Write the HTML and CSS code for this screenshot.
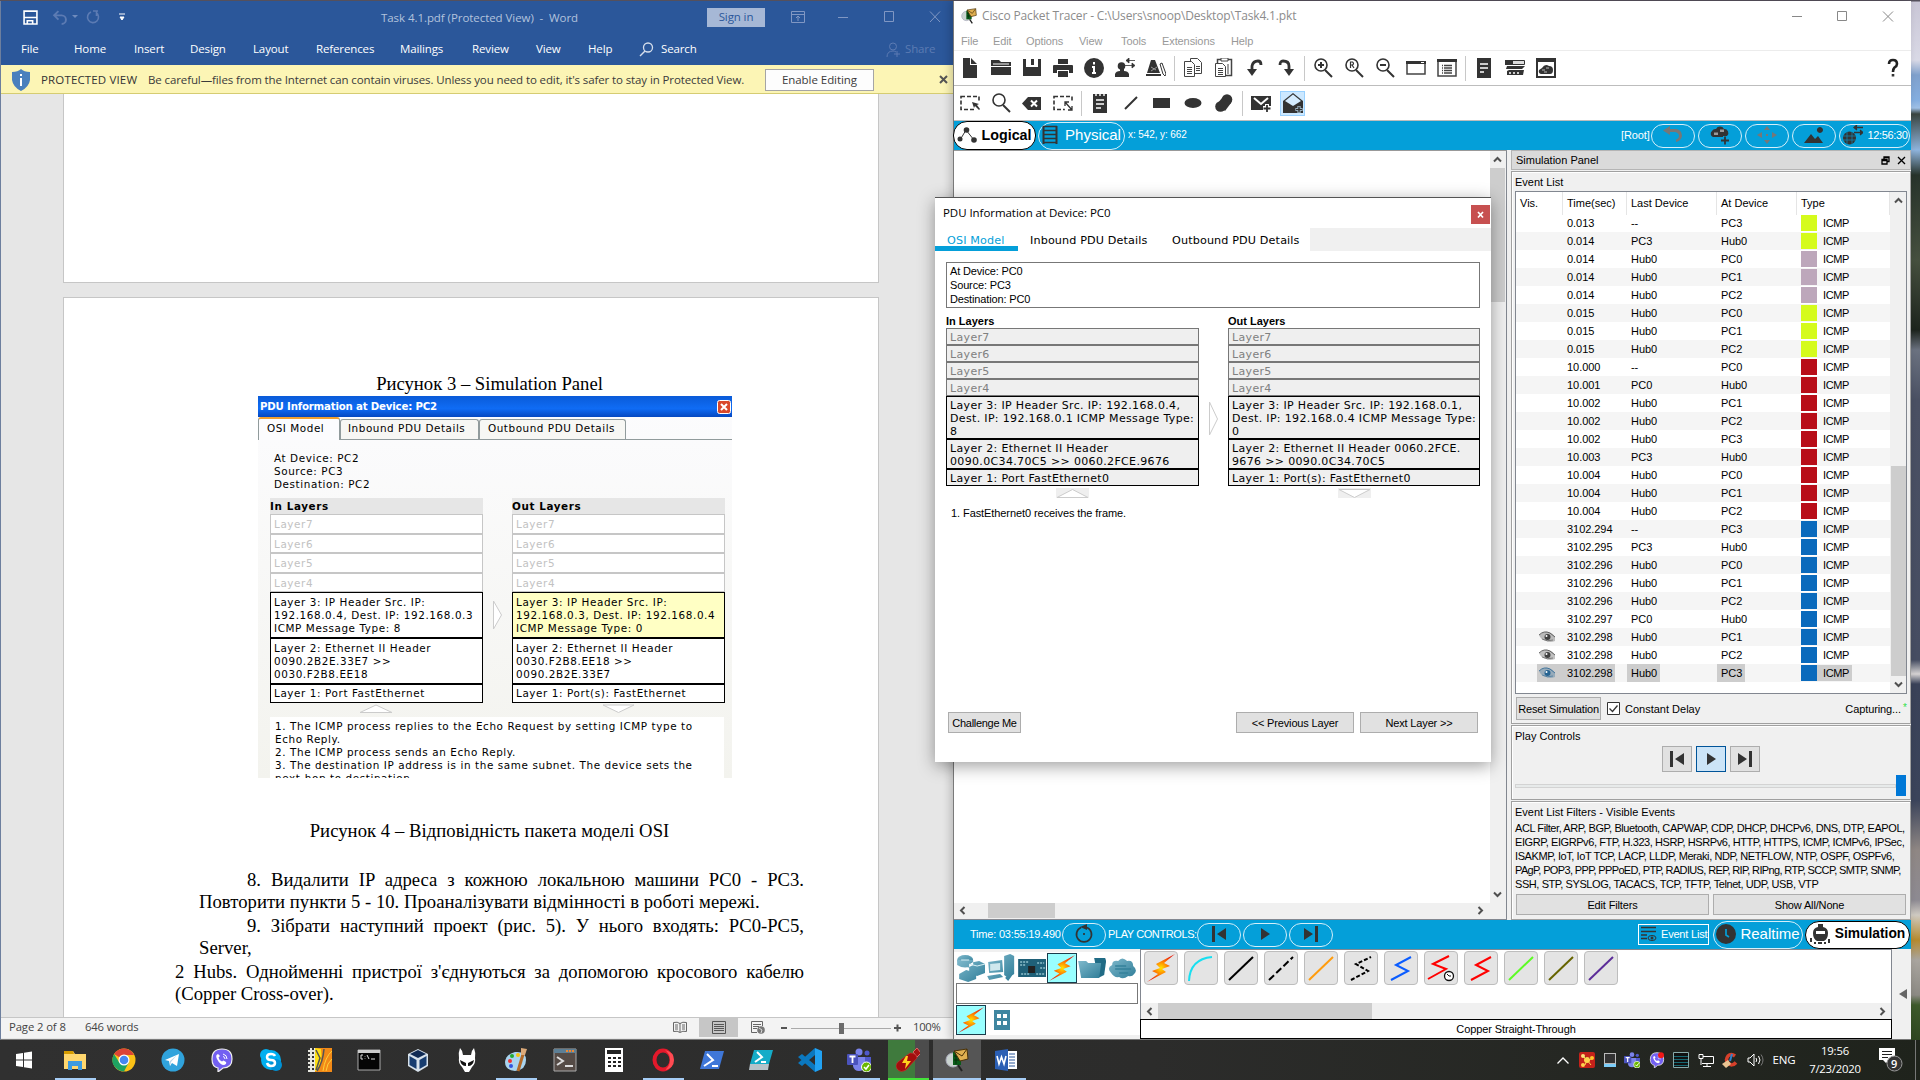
FILE: index.html
```html
<!DOCTYPE html>
<html lang="en">
<head>
<meta charset="utf-8">
<title>Desktop</title>
<link rel="stylesheet" href="styles.css">
</head>
<body>
<svg class="defs" aria-hidden="true">
  <defs>
    <radialGradient id="flame"><stop offset="0" stop-color="#ffe600"/><stop offset=".5" stop-color="#ff7a00"/><stop offset="1" stop-color="#e8200c"/></radialGradient>
    <linearGradient id="teal" x1="0" y1="0" x2="1" y2="1"><stop offset="0" stop-color="#7fb9cc"/><stop offset="1" stop-color="#2f7d98"/></linearGradient>
    <symbol id="bolt" viewBox="0 0 30 30"><path d="M29 1 10 11l4 4-8 3 6 3L1 29l19-10-4-3 8-3-6-3z" fill="url(#flame)"/></symbol>
    <symbol id="prev" viewBox="0 0 20 20"><path d="M3 2h3v16H3zM17 4v12L8 10z"/></symbol>
    <symbol id="play" viewBox="0 0 20 20"><path d="M6 4v12l9-6z"/></symbol>
    <symbol id="next" viewBox="0 0 20 20"><path d="M14 2h3v16h-3zM3 4v12l9-6z"/></symbol>
    <symbol id="up" viewBox="0 0 9 9"><path d="M1 6.500 4.500 3 8 6.500" fill="none" stroke="#505050" stroke-width="2"/></symbol>
    <symbol id="down" viewBox="0 0 9 9"><path d="M1 2.500 4.500 6 8 2.500" fill="none" stroke="#505050" stroke-width="2"/></symbol>
    <symbol id="left" viewBox="0 0 9 9"><path d="M6.500 1 3 4.500 6.500 8" fill="none" stroke="#505050" stroke-width="2"/></symbol>
    <symbol id="right" viewBox="0 0 9 9"><path d="M2.500 1 6 4.500 2.500 8" fill="none" stroke="#505050" stroke-width="2"/></symbol>
    <symbol id="eye" viewBox="0 0 16 12"><path d="M0 4Q4 0 9 1q5 1 7 5v4q-5 2-9 0Q2 9 0 4z" fill="currentColor" opacity=".3"/><path d="M0 4Q5-1 11 2l5 4" fill="none" stroke="currentColor" opacity=".7"/><circle cx="8.500" cy="6" r="3" fill="currentColor" opacity=".9"/><circle cx="7.500" cy="5" r="1" fill="#fff"/><path d="M3 8q5 3 11 1" fill="none" stroke="currentColor" opacity=".5"/></symbol>
    <symbol id="cloudplus" viewBox="0 0 20 20"><path d="M3 12a3.500 3.500 0 0 1-1-6 4 4 0 0 1 4-2 4.500 4.500 0 0 1 8 0 4 4 0 0 1 3 7l-3 1z"/><path d="M4 7.500h4v2.500H4zM10 4.500h4v2.500h-4z" fill="#999"/><path d="M15 11v9M10.500 15.500h9" stroke="#049fd9" stroke-width="4"/><path d="M15 11.500v8M11 15.500h8" stroke="#333" stroke-width="1.800"/></symbol>
    <symbol id="teams" viewBox="0 0 24 24"><circle cx="12" cy="4" r="3.500" fill="#7b83eb"/><circle cx="20" cy="5" r="2.500" fill="#5059c9"/><path d="M15 9h9v7q-1 4-6 4z" fill="#5059c9"/><path d="M6 9h12v9q-1 5-6 5t-6-5z" fill="#7b83eb"/><rect y="6" width="11" height="11" rx="1" fill="#4b53bc"/><path d="M2.500 8.500h6M5.500 8.500V15" stroke="#fff" stroke-width="1.800"/><circle cx="19.500" cy="19" r="5" fill="#6bb700" stroke="#fff"/><path d="m17 19 2 2 3-4" fill="none" stroke="#fff" stroke-width="1.500"/></symbol>
    <symbol id="viber" viewBox="0 0 24 24"><path d="M12 1q10 0 10 10 0 9-9 9l-5 4v-4Q2 19 2 11 2 1 12 1z" fill="#7360f2" stroke="#eee" stroke-width="1.200"/><path d="M8 6q-3 1-1 5 3 6 7 6 3-1 2-3l-2.500-1.500-1.500 1q-3-1-3.500-4L10 8z" fill="#fff"/><path d="M13 6q4 1 4 5M13 8.500q2 .5 2 2.500" fill="none" stroke="#fff"/></symbol>
    <symbol id="tracericon" viewBox="0 0 24 24"><circle cx="8" cy="12" r="7" fill="#c9d3d0" stroke="#aab"/><path d="M8 4h8v13H8z" fill="#0a5c1a"/><path d="M9 8h6M9 12h6M11 5v11" stroke="#062c0c"/><path d="M9 3l13-2 1 10-8 2z" fill="#e0b050" stroke="#4a3208"/><path d="m9 3 8 5 5-7" fill="none" stroke="#4a3208"/><path d="m13 17 4 6" stroke="#222" stroke-width="2"/></symbol>
  </defs>
</svg>

<main class="desktop">

<section class="word">
  <div class="w-title">
    <svg class="w-save" viewBox="0 0 14 14"><path d="M1 1h12v12H1zM1 7h12M4 13v-3h5v3" fill="none" stroke="#fff" stroke-width="1.500"/></svg>
    <svg class="w-undo" viewBox="0 0 14 14"><path d="M2 5h7a4 4 0 0 1 0 8M6 1 2 5l4 4" fill="none" stroke="#5c7bb3" stroke-width="1.800"/></svg>
    <svg class="w-caret" viewBox="0 0 6 4"><path d="M0 0h6L3 3z" fill="#6f8bbd"/></svg>
    <svg class="w-redo" viewBox="0 0 14 14"><path d="M5 2a5.500 5.500 0 1 0 5 .5M7 1h5M10.500 1v5" fill="none" stroke="#5c7bb3" stroke-width="1.600"/></svg>
    <svg class="w-more" viewBox="0 0 6 8"><path d="M0 1h6M1 4h4L3 7z" stroke="#fff" fill="#fff"/></svg>
    <span class="w-name">Task 4.1.pdf (Protected View)&nbsp; -&nbsp; Word</span>
    <span class="w-sign">Sign in</span>
    <svg class="w-sys" viewBox="0 0 152 12"><g fill="none" stroke="#8097c3"><path d="M.5.5h13v11H.5zM.5 3.500h13M7 10V5.500M5 7l2-2 2 2M47 6.500h10M93.500.5h9v10h-9zM139 .5l10 10.500M149 .5 139 11"/></g></svg>
  </div>
  <nav class="w-tabs"><span>File</span><span>Home</span><span>Insert</span><span>Design</span><span>Layout</span><span>References</span><span>Mailings</span><span>Review</span><span>View</span><span>Help</span><svg width="15" height="15" viewBox="0 0 15 15"><circle cx="9" cy="5.500" r="4.500" fill="none" stroke="#d5deec" stroke-width="1.300"/><path d="m6 9-5 5" stroke="#d5deec" stroke-width="1.500"/></svg><span>Search</span><svg class="w-person" width="15" height="15" viewBox="0 0 15 15"><g fill="none" stroke="#5c7bb3"><circle cx="7" cy="4.500" r="3.500"/><path d="M1 15q0-6 6-6 2 0 3 1M11 9v6M8 12h6"/></g></svg><span class="w-share">Share</span></nav>
  <div class="w-warn">
    <svg width="18" height="22" viewBox="0 0 18 22"><path d="M9 0q3 3 9 3v8q-1 7-9 11Q1 18 0 11V3q6 0 9-3z" fill="#4a80bd"/><path d="M9 5v2M9 9v8" stroke="#fff" stroke-width="2"/></svg>
    <b>PROTECTED VIEW</b>
    <span class="w-careful">Be careful—files from the Internet can contain viruses. Unless you need to edit, it's safer to stay in Protected View.</span>
    <span class="w-enable">Enable Editing</span>
    <svg class="w-close" width="9" height="9" viewBox="0 0 9 9"><path d="m1 1 7 7M8 1 1 8" stroke="#555" stroke-width="2"/></svg>
  </div>
  <div class="w-doc">
    <div class="sheet sheet-one"></div>
    <article class="sheet sheet-two">
      <p class="cap">Рисунок 3 – Simulation Panel</p>
      <figure class="xp">
        <div class="xp-title"><span>PDU Information at Device: PC2</span><svg width="14" height="14" viewBox="0 0 14 14"><rect x=".5" y=".5" width="13" height="13" rx="2" fill="#d9482b" stroke="#fff"/><path d="m4 4 6 6M10 4l-6 6" stroke="#fff" stroke-width="2"/></svg></div>
        <div class="xp-tabs"><span class="on">OSI Model</span><span>Inbound PDU Details</span><span>Outbound PDU Details</span></div>
        <div class="xp-info">At Device: PC2<br>Source: PC3<br>Destination: PC2</div>
        <div class="xp-cols">
          <div class="xp-col"><h4>In Layers</h4><div class="off">Layer7</div><div class="off">Layer6</div><div class="off">Layer5</div><div class="off">Layer4</div><div class="l3">Layer 3: IP Header Src. IP:<br>192.168.0.4, Dest. IP: 192.168.0.3<br>ICMP Message Type: 8</div><div class="l2">Layer 2: Ethernet II Header<br>0090.2B2E.33E7 &gt;&gt;<br>0030.F2B8.EE18</div><div class="l1">Layer 1: Port FastEthernet</div></div>
          <svg width="29" height="206" viewBox="0 0 29 206"><path d="M10.500 103v28l8-14z" fill="#fff" stroke="#ccc"/></svg>
          <div class="xp-col"><h4>Out Layers</h4><div class="off">Layer7</div><div class="off">Layer6</div><div class="off">Layer5</div><div class="off">Layer4</div><div class="l3 hot">Layer 3: IP Header Src. IP:<br>192.168.0.3, Dest. IP: 192.168.0.4<br>ICMP Message Type: 0</div><div class="l2">Layer 2: Ethernet II Header<br>0030.F2B8.EE18 &gt;&gt;<br>0090.2B2E.33E7</div><div class="l1">Layer 1: Port(s): FastEthernet</div></div>
        </div>
        <svg class="xp-arrows" width="474" height="14" viewBox="0 0 474 14"><path d="M102 9.500 118 2l16 7.500zM345 2h31l-15.500 7.500z" fill="#fff" stroke="#ccc"/></svg>
        <div class="xp-note">1. The ICMP process replies to the Echo Request by setting ICMP type to<br>Echo Reply.<br>2. The ICMP process sends an Echo Reply.<br>3. The destination IP address is in the same subnet. The device sets the<br>next-hop to destination.</div>
      </figure>
      <p class="cap cap-two">Рисунок 4 – Відповідність пакета моделі OSI</p>
      <div class="body">
        <p class="just first">8. Видалити IP адреса з кожною локальною машини PC0 - PC3.</p>
        <p class="ind">Повторити пункти 5 - 10. Проаналізувати відмінності в роботі мережі.</p>
        <p class="just first nine">9. Зібрати наступний проект (рис. 5). У нього входять: PC0-PC5,</p>
        <p class="ind">Server,</p>
        <p class="just hubs">2 Hubs. Однойменні пристрої з'єднуються за допомогою кросового кабелю</p>
        <p>(Copper Cross-over).</p>
      </div>
    </article>
  </div>
  <footer class="w-status">
    <span class="w-page">Page 2 of 8</span><span class="w-words">646 words</span>
    <span class="w-view"><svg width="14" height="12" viewBox="0 0 14 12"><path d="M.5 1.500q4-1 6.500 1 2.500-2 6.500-1v9q-4-1-6.500 1-2.500-2-6.500-1zM7 2v9M2 4h3M2 6h3M2 8h3M9 4h3M9 6h3M9 8h3" fill="none" stroke="#666"/></svg></span>
    <span class="w-view on"><svg width="14" height="13" viewBox="0 0 14 13"><path d="M.5.5h13v12H.5zM2 3.500h10M2 5.500h10M2 7.500h10M2 9.500h10" fill="none" stroke="#555"/></svg></span>
    <span class="w-view"><svg width="14" height="13" viewBox="0 0 14 13"><path d="M6 11.500H.5V.5h11V5M2 3.500h8M2 5.500h6M2 7.500h4" fill="none" stroke="#666"/><circle cx="10" cy="9" r="3.800" fill="#777"/><path d="m8 7 3 2-1 3" stroke="#ddd" fill="none"/></svg></span>
    <svg class="w-zoom" width="120" height="12" viewBox="0 0 120 12"><path d="M0 6h6M113 6h7M116.500 2.500v7" stroke="#555" stroke-width="2"/><path d="M10 6.500h100" stroke="#aaa"/><path d="M58 1h5v11h-5z" fill="#6b6b6b"/></svg>
    <span class="w-pct">100%</span>
  </footer>
</section>

<section class="tracer">
  <header class="t-title"><svg width="16" height="16"><use href="#tracericon"/></svg><span>Cisco Packet Tracer - C:\Users\snoop\Desktop\Task4.1.pkt</span><svg class="t-sys" width="102" height="12" viewBox="0 0 102 12"><path d="M0 6.500h10M45.500 1.500h9v9h-9zM91 1.500l10 10M101 1.500l-10 10" fill="none" stroke="#888"/></svg></header>
  <nav class="t-menu"><span>File</span><span>Edit</span><span>Options</span><span>View</span><span>Tools</span><span>Extensions</span><span>Help</span></nav>
  <div class="t-bar">
    <i><svg viewBox="0 0 20 20"><path d="M3 0h7v7h7v13H3zM11 0l6 6h-6z"/></svg></i>
    <i><svg viewBox="0 0 20 20"><path d="M0 2h8l2 2h10v4H0zM0 9h20v8H0z"/><path d="M2 6h16" stroke="#fff"/></svg></i>
    <i><svg viewBox="0 0 20 20"><path d="M1 1h3v8h12V1h3v17H1zM9 1h3v6H9z"/></svg></i>
    <i><svg viewBox="0 0 20 20"><path d="M5 1h10v5H5zM1 7h18q1 0 1 1v7h-4v-3H4v3H0V8q0-1 1-1zM5 13h10v6H5z"/></svg></i>
    <i><svg viewBox="0 0 20 20"><circle cx="10" cy="10" r="10"/><path d="M10 4v2.500M10 8v7M8 9h2M8 15h4" stroke="#fff" stroke-width="2"/></svg></i>
    <i><svg viewBox="0 0 20 20"><circle cx="6.500" cy="8" r="3.800"/><path d="M0 19v-3q1-3 5-3V9h4v4q4 0 5 3v3z"/><path d="M11 2.500h9M14 0l-3 2.500L14 5zM10 7.500h8M17 5l3 2.500L17 10z" stroke="#333" stroke-width=".8"/></svg></i>
    <i><svg viewBox="0 0 20 20"><path d="M5 2h4l5 13H1zM0 16h15v2H0z"/><path d="m5 9 5 3M5 13l6-4" stroke="#999" stroke-width="1"/><path d="m14 6 2-1 4 11-1 2-2-2z" fill="#fff" stroke="#333"/></svg></i>
    <b></b>
    <i><svg viewBox="0 0 20 20"><g fill="#fff" stroke="#444"><path d="M7.500.5h7l4 4v11h-11z"/><path d="M1.500 3.500h7l3 3v12h-10zM4 9.500h5M4 11.500h5M4 13.500h5M4 15.500h5M13 8.500h4M13 10.500h4M13 12.500h4"/></g></svg></i>
    <i><svg viewBox="0 0 20 20"><g fill="#fff" stroke="#444"><path d="M3.500 1.500h14v16h-14z" stroke-width="1.500"/><path d="M7 0h7v3H7z"/><path d="M1.500 5.500h7l3 3v10h-10zM4 10.500h5M4 12.500h5M4 14.500h5M4 16.500h5M14 6v10"/></g></svg></i>
    <i><svg viewBox="0 0 20 20"><path d="M7 14V8q1-5 6-5 3 0 3 4" fill="none" stroke="#333" stroke-width="2.800"/><path d="M2 11h10l-5 7z"/></svg></i>
    <i><svg viewBox="0 0 20 20"><path d="M4 7q0-4 3-4 6 0 6 5v6" fill="none" stroke="#333" stroke-width="2.800"/><path d="M8 11h10l-5 7z"/></svg></i>
    <b></b>
    <i><svg viewBox="0 0 20 20"><circle cx="8" cy="7" r="6" fill="none" stroke="#333" stroke-width="1.600"/><path d="m12 12 7 7M5 7h6M8 4v6" stroke="#333" stroke-width="2"/></svg></i>
    <i><svg viewBox="0 0 20 20"><circle cx="8" cy="7" r="6" fill="none" stroke="#333" stroke-width="1.600"/><path d="m12 12 7 7" stroke="#333" stroke-width="2"/><path d="M6.500 10V4h2q2 1.500 0 3h-2M8 7l2 3" fill="none" stroke="#333" stroke-width="1.200"/></svg></i>
    <i><svg viewBox="0 0 20 20"><circle cx="8" cy="7" r="6" fill="none" stroke="#333" stroke-width="1.600"/><path d="m12 12 7 7M5 7h6" stroke="#333" stroke-width="2"/></svg></i>
    <i><svg viewBox="0 0 20 20"><path d="M1 4h18v12H1z" fill="none" stroke="#444" stroke-width="1.500"/><path d="M0 3h20v3H0z"/><path d="M15 4.500h3" stroke="#fff"/></svg></i>
    <i><svg viewBox="0 0 20 20"><path d="M1 2h18v16H1z" fill="none" stroke="#444" stroke-width="1.500"/><path d="M0 1h20v3H0z"/><path d="M5 7.500h1M7 7.500h8M5 10h1M7 10h8M5 12.500h1M7 12.500h8M5 15h1M7 15h8" stroke="#444" stroke-width="1.300"/></svg></i>
    <b></b>
    <i><svg viewBox="0 0 20 20"><path d="M3 0h14v20H3z"/><path d="M6 6h8M6 10h8M6 14h4" stroke="#fff" stroke-width="1.500"/></svg></i>
    <i><svg viewBox="0 0 20 20"><path d="M.5 2.500h19v4H.5z" fill="#ddd" stroke="#333"/><path d="M0 2h8v5H0zM2 8h18l-3 3H1zM2 13l2-1h15l-1 5H2z"/><path d="M4 15h2M8 15h2M12 15h2" stroke="#fff" stroke-width="1.300"/></svg></i>
    <i><svg viewBox="0 0 20 20"><path d="M1 1h18v18H1z" fill="none" stroke="#333" stroke-width="2"/><path d="M0 0h20v4H0zM5 16q-3-1-2-4l3-2q3-5 7-2 4 0 4 4t-3 4z"/><path d="M6 12h3M10 10h3M8 14h3" stroke="#bbb"/></svg></i>
    <svg class="t-help" width="12" height="20" viewBox="0 0 12 20"><path d="M2 6q0-4 4-4t4 4q0 2-2.500 3.500Q6 11 6 14" fill="none" stroke="#222" stroke-width="2.600"/><path d="M4.700 16h2.600v2.500H4.700z"/></svg>
  </div>
  <div class="t-bar t-bar2">
    <i><svg viewBox="0 0 20 20"><path d="M1 3.500h18v13H1z" fill="none" stroke="#333" stroke-width="1.600" stroke-dasharray="4 2"/><path d="M11 8h9v10h-4z" fill="#fff"/><path d="m12 9 7 2-2 1 3 4-1 1-4-4-1 2z"/></svg></i>
    <i><svg viewBox="0 0 20 20"><circle cx="8" cy="7" r="6" fill="none" stroke="#333" stroke-width="1.600"/><path d="m12 12 7 7" stroke="#333" stroke-width="2"/></svg></i>
    <i><svg viewBox="0 0 20 20"><path d="M0 10.500 6 4h13v13H6z"/><path d="m9 7.500 6 6M15 7.500l-6 6" stroke="#fff" stroke-width="2"/></svg></i>
    <i><svg viewBox="0 0 20 20"><path d="M1 3.500h18v13H1z" fill="none" stroke="#333" stroke-width="1.600" stroke-dasharray="4 2"/><path d="M11 8h9v10h-8z" fill="#fff"/><path d="m12 9 7 8M12 13V9h4M15 17h4v-4" fill="none" stroke="#333" stroke-width="1.300"/></svg></i>
    <b></b>
    <i><svg viewBox="0 0 20 20"><path d="M3 1h14v19H3z"/><path d="M6 0v3M10 0v3M14 0v3M6 7h8M6 11h8M6 15h5" stroke="#fff" stroke-width="1.400"/></svg></i>
    <i><svg viewBox="0 0 20 20"><path d="M4 16 16 4" stroke="#333" stroke-width="2"/></svg></i>
    <i><svg viewBox="0 0 20 20"><path d="M1 5h17v10H1z"/></svg></i>
    <i><svg viewBox="0 0 20 20"><ellipse cx="10" cy="10" rx="8.500" ry="5"/></svg></i>
    <i><svg viewBox="0 0 20 20"><circle cx="13" cy="6.500" r="5.300"/><circle cx="6.500" cy="13.500" r="5.300"/><path d="m8 5-5 6 8 7 6-8z"/></svg></i>
    <b></b>
    <i><svg viewBox="0 0 20 20"><path d="M0 3h20v14H0z"/><path d="m3 5 7 6 7-6" fill="none" stroke="#fff" stroke-width="2"/><path d="M16 11v8M12 15h8" stroke="#fff" stroke-width="4"/><path d="M16 12v7M12.500 15.500h7" stroke="#333" stroke-width="1.800"/></svg></i>
    <i class="sel"><svg viewBox="0 0 20 20"><path d="m0 8 10-8 10 8v12H0z"/><path d="m2 8 8-6.500L18 8l-8 5z" fill="#d5ecff"/><path d="M16 13v7M12.500 16.500h7" stroke="#b8d8ee" stroke-width="3"/><path d="M16 13.500v6M13 16.500h6" stroke="#333" stroke-width="1.500"/></svg></i>
  </div>
  <div class="t-blue">
    <span class="pill logical"><svg width="20" height="18" viewBox="0 0 20 18"><path d="m3 14 6-10 8 10" fill="none" stroke="#333"/><circle cx="9.500" cy="4" r="2.800"/><circle cx="3" cy="13" r="2.500"/><circle cx="17" cy="14" r="2.800"/></svg>Logical</span>
    <span class="pill physical"><svg width="16" height="20" viewBox="0 0 16 20"><path d="M1.500 1v18M14.500 1v18" stroke="#333" stroke-width="2"/><path d="M1 1.500h14M1 5.500h14M1 9.500h14M1 13.500h14M1 17.500h14" stroke="#333" stroke-width="1.500"/></svg>Physical</span>
    <span class="t-xy">x: 542, y: 662</span>
    <span class="t-root">[Root]</span>
    <span class="pill p44"><svg width="20" height="20" viewBox="0 0 20 20"><path d="M7 1v9L0 5.500zM5 4h8q6 1 6 7-1 5-6 6v-2.500q3-1 3-4-.5-3-4-3.500H5z" fill="#777"/></svg></span>
    <span class="pill p44"><svg width="20" height="20"><use href="#cloudplus"/></svg></span>
    <span class="pill p44"><svg width="20" height="20" viewBox="0 0 20 20"><path d="M7 5h6l-3-4zM7 15h6l-3 4zM5 7v6l-5-3zM15 7v6l5-3zM9 9h2v2H9z" fill="#777"/></svg></span>
    <span class="pill p44"><svg width="20" height="20" viewBox="0 0 20 20"><path d="m0 18 7-9 4 5 3-3 5 7zM16 2a3 3 0 1 1-.1 0z"/></svg></span>
    <span class="pill clock"><svg width="20" height="20" viewBox="0 0 20 20"><circle cx="6.500" cy="13" r="6.500"/><path d="M0 11h13M0 15h13M4 7v12M9 7v12" stroke="#1583ad" stroke-width=".8"/><path d="M11 2.500h9M11 7.500h9M14 0l-3 2.500L14 5M17 5l3 2.500-3 2.500" stroke="#333" stroke-width="1.300"/></svg>12:56:30</span>
  </div>
  <div class="t-mid">
    <div class="canvas">
      <div class="c-area"></div>
      <div class="vs"><svg width="9" height="9"><use href="#up"/></svg><u></u><svg width="9" height="9"><use href="#down"/></svg></div>
      <div class="hs"><svg width="9" height="9"><use href="#left"/></svg><u></u><svg width="9" height="9"><use href="#right"/></svg></div>
    </div>
    <aside class="sim">
      <div class="s-head"><span>Simulation Panel</span><svg width="25" height="9" viewBox="0 0 25 9"><path d="M3 3V1h5v4.500H6M1 3.500h5V8H1zM1 4.500h5M3 1.500h5M17 1l7 7M24 1l-7 7" fill="none" stroke="#000" stroke-width="1.300"/></svg></div>
      <div class="s-group s-events">
        <div class="s-label">Event List</div>
        <div class="s-table">
          <div class="rows">
            <div class="th"><span>Vis.</span><span>Time(sec)</span><span>Last Device</span><span>At Device</span><span>Type</span></div>
            <div class="tr lime"><i></i><span>0.013</span><span>--</span><span>PC3</span><span>ICMP</span></div>
            <div class="tr lime"><i></i><span>0.014</span><span>PC3</span><span>Hub0</span><span>ICMP</span></div>
            <div class="tr mauve"><i></i><span>0.014</span><span>Hub0</span><span>PC0</span><span>ICMP</span></div>
            <div class="tr mauve"><i></i><span>0.014</span><span>Hub0</span><span>PC1</span><span>ICMP</span></div>
            <div class="tr mauve"><i></i><span>0.014</span><span>Hub0</span><span>PC2</span><span>ICMP</span></div>
            <div class="tr lime"><i></i><span>0.015</span><span>Hub0</span><span>PC0</span><span>ICMP</span></div>
            <div class="tr lime"><i></i><span>0.015</span><span>Hub0</span><span>PC1</span><span>ICMP</span></div>
            <div class="tr lime"><i></i><span>0.015</span><span>Hub0</span><span>PC2</span><span>ICMP</span></div>
            <div class="tr red"><i></i><span>10.000</span><span>--</span><span>PC0</span><span>ICMP</span></div>
            <div class="tr red"><i></i><span>10.001</span><span>PC0</span><span>Hub0</span><span>ICMP</span></div>
            <div class="tr red"><i></i><span>10.002</span><span>Hub0</span><span>PC1</span><span>ICMP</span></div>
            <div class="tr red"><i></i><span>10.002</span><span>Hub0</span><span>PC2</span><span>ICMP</span></div>
            <div class="tr red"><i></i><span>10.002</span><span>Hub0</span><span>PC3</span><span>ICMP</span></div>
            <div class="tr red"><i></i><span>10.003</span><span>PC3</span><span>Hub0</span><span>ICMP</span></div>
            <div class="tr red"><i></i><span>10.004</span><span>Hub0</span><span>PC0</span><span>ICMP</span></div>
            <div class="tr red"><i></i><span>10.004</span><span>Hub0</span><span>PC1</span><span>ICMP</span></div>
            <div class="tr red"><i></i><span>10.004</span><span>Hub0</span><span>PC2</span><span>ICMP</span></div>
            <div class="tr blue"><i></i><span>3102.294</span><span>--</span><span>PC3</span><span>ICMP</span></div>
            <div class="tr blue"><i></i><span>3102.295</span><span>PC3</span><span>Hub0</span><span>ICMP</span></div>
            <div class="tr blue"><i></i><span>3102.296</span><span>Hub0</span><span>PC0</span><span>ICMP</span></div>
            <div class="tr blue"><i></i><span>3102.296</span><span>Hub0</span><span>PC1</span><span>ICMP</span></div>
            <div class="tr blue"><i></i><span>3102.296</span><span>Hub0</span><span>PC2</span><span>ICMP</span></div>
            <div class="tr blue"><i></i><span>3102.297</span><span>PC0</span><span>Hub0</span><span>ICMP</span></div>
            <div class="tr blue"><i><svg width="16" height="12"><use href="#eye"/></svg></i><span>3102.298</span><span>Hub0</span><span>PC1</span><span>ICMP</span></div>
            <div class="tr blue"><i><svg width="16" height="12"><use href="#eye"/></svg></i><span>3102.298</span><span>Hub0</span><span>PC2</span><span>ICMP</span></div>
            <div class="tr blue cur"><i><svg width="16" height="12"><use href="#eye"/></svg></i><span>3102.298</span><span>Hub0</span><span>PC3</span><span>ICMP</span></div>
          </div>
          <div class="vs tv"><svg width="9" height="9"><use href="#up"/></svg><u></u><svg width="9" height="9"><use href="#down"/></svg></div>
        </div>
        <div class="s-reset"><span class="btn">Reset Simulation</span><svg width="13" height="13" viewBox="0 0 13 13"><path d="M.5.5h12v12H.5z" fill="#fff" stroke="#333"/><path d="m2.500 6.500 3 3 5-6" fill="none" stroke="#333" stroke-width="1.300"/></svg><span>Constant Delay</span><span class="cap-state">Capturing...</span><em>*</em></div>
      </div>
      <div class="s-group s-play">
        <div class="s-label">Play Controls</div>
        <div class="s-btns"><span class="btn"><svg width="20" height="20"><use href="#prev"/></svg></span><span class="btn on"><svg width="20" height="20"><use href="#play"/></svg></span><span class="btn"><svg width="20" height="20"><use href="#next"/></svg></span></div>
        <div class="slider"><div></div><u></u></div>
      </div>
      <div class="s-group s-filter">
        <div class="s-label">Event List Filters - Visible Events</div>
        <p>ACL Filter, ARP, BGP, Bluetooth, CAPWAP, CDP, DHCP, DHCPv6, DNS, DTP, EAPOL,<br>EIGRP, EIGRPv6, FTP, H.323, HSRP, HSRPv6, HTTP, HTTPS, ICMP, ICMPv6, IPSec,<br>ISAKMP, IoT, IoT TCP, LACP, LLDP, Meraki, NDP, NETFLOW, NTP, OSPF, OSPFv6,<br><span class="tight">PAgP, POP3, PPP, PPPoED, PTP, RADIUS, REP, RIP, RIPng, RTP, SCCP, SMTP, SNMP,</span><br>SSH, STP, SYSLOG, TACACS, TCP, TFTP, Telnet, UDP, USB, VTP</p>
        <div class="s-two"><span class="btn">Edit Filters</span><span class="btn">Show All/None</span></div>
      </div>
    </aside>
  </div>
  <div class="t-blue t-time">
    <span class="time">Time: 03:55:19.490</span>
    <span class="pill p44"><svg width="20" height="20" viewBox="0 0 20 20"><path d="M7 3.500a7.500 7.500 0 1 0 6 0M10 9v2" fill="none" stroke="#333" stroke-width="1.700"/><path d="m6 3 7-3v6z"/></svg></span>
    <span class="pc">PLAY CONTROLS:</span>
    <span class="pill p44"><svg width="20" height="20"><use href="#prev"/></svg></span>
    <span class="pill p44"><svg width="20" height="20"><use href="#play"/></svg></span>
    <span class="pill p44"><svg width="20" height="20"><use href="#next"/></svg></span>
    <span class="evbtn"><svg width="16" height="16" viewBox="0 0 16 16"><path d="M0 1.500h15M0 5.500h15M0 9h6M0 12.500h6" stroke="#333" stroke-width="1.600"/><ellipse cx="11" cy="12" rx="4" ry="2.500" fill="none" stroke="#333"/><circle cx="11" cy="12" r="1.500"/></svg>Event List</span>
    <span class="pill realtime"><svg width="20" height="20" viewBox="0 0 20 20"><circle cx="10" cy="10" r="10"/><path d="M10 5v6l3 2" fill="none" stroke="#049fd9" stroke-width="1.700"/></svg>Realtime</span>
    <span class="pill simulation"><svg width="20" height="20" viewBox="0 0 20 20"><path d="M8 0h5v3q5 1 5 6 0 6-4 8H7q-4-2-4-8 0-5 5-6z"/><path d="M6 7h9v3H6z" fill="#fff"/><path d="M0 14h2v4H0zM4 18h2v2H4zM8 18h4v2H8zM14 18h2v2h-2zM18 15h2v4h-2z"/></svg>Simulation</span>
  </div>
  <div class="t-foot">
    <div class="dev">
      <div class="dev-row">
        <i><svg viewBox="0 0 28 28" fill="url(#teal)"><ellipse cx="8" cy="6" rx="8" ry="5"/><path d="M0 6v5q8 5 16 0V6M12 9l10-2 6 3v9l-8 3-8-3zM2 20l7-4 10 3v6l-8 3-9-3z"/><path d="m4 6 8 0M12 10l8 2 8-2" stroke="#d9f0f5" fill="none"/></svg></i>
        <i><svg viewBox="0 0 28 28" fill="url(#teal)"><path d="M17 2l6-2 4 2v18l-6 4-4-3zM1 8l14-2 1 12-14 1zM0 22l13-2 3 3-14 3zM18 24l5-6 3 2-5 7z"/><path d="m3 10 10-1v7L3 17z" fill="#cfe8ee"/></svg></i>
        <i><svg viewBox="0 0 28 28"><path d="M0 5h28v18H0z" fill="#1f6078"/><path d="M2 8h9M2 11h6M19 9h7M18 20h8M3 20h8M22 14h5" stroke="#8fc0cc" stroke-width="1.500" stroke-dasharray="2 1"/><path d="M10 12h7v7h-7z" fill="#222"/></svg></i>
        <i class="sel"><svg viewBox="0 0 30 30"><use href="#bolt"/></svg></i>
        <i><svg viewBox="0 0 28 28"><path d="M16 4h11l1 3-2 14-6 3z" fill="#206b85"/><path d="M0 7h8l2 2h13l-2 15H3z" fill="url(#teal)"/></svg></i>
        <i><svg viewBox="0 0 28 28"><path d="M3 19q-5-5 1-8 0-5 6-4 4-5 9 0 6-1 6 5 5 4 1 8-2 3-6 2-5 4-9 1-5 1-8-4z" fill="url(#teal)"/><path d="M7 12h11M7 15h16M11 19h9" stroke="#34819b" stroke-width="1.500"/></svg></i>
      </div>
      <div class="dev-input"></div>
      <div class="dev-row"><i class="sel"><svg viewBox="0 0 30 30"><use href="#bolt"/></svg></i><i class="gridicon"><svg viewBox="0 0 16 20"><path d="M0 0h16v20H0z" fill="#3f86a0"/><path d="M3 4h4v4H3zM9 4h4v4H9zM3 11h4v4H3zM9 11h4v4H9z" fill="#fff"/></svg></i></div>
    </div>
    <div class="cables">
      <div class="cab-row">
        <i><svg viewBox="0 0 30 30"><use href="#bolt"/></svg></i>
        <i><svg viewBox="0 0 30 30"><path d="M3 28Q4 6 26 4" stroke="#18dff0"/></svg></i>
        <i><svg viewBox="0 0 30 30"><path d="M3 27 27 4" stroke="#000"/></svg></i>
        <i><svg viewBox="0 0 30 30"><path d="M3 27 27 4" stroke="#000" stroke-dasharray="7 3"/></svg></i>
        <i><svg viewBox="0 0 30 30"><path d="M3 27 27 4" stroke="#ff9c0d"/></svg></i>
        <i><svg viewBox="0 0 30 30"><path d="m5 27 17-9-12-7 15-7" stroke="#000" stroke-dasharray="4 2"/></svg></i>
        <i><svg viewBox="0 0 30 30"><path d="m5 27 17-9-12-6 15-8" stroke="#0a5cff"/></svg></i>
        <i><svg viewBox="0 0 30 30"><path d="m2 26 18-10-13-5 16-8" stroke="#f00"/><circle cx="23" cy="23" r="4.500" fill="#fff" stroke="#111" stroke-width="1.300"/><path d="m21 21 2 2h2" stroke="#111" stroke-width="1"/></svg></i>
        <i><svg viewBox="0 0 30 30"><path d="m5 27 17-9-12-6 15-8" stroke="#f00"/></svg></i>
        <i><svg viewBox="0 0 30 30"><path d="M3 27 27 4" stroke="#5dfb25"/></svg></i>
        <i><svg viewBox="0 0 30 30"><path d="M3 27 27 4" stroke="#666400"/></svg></i>
        <i><svg viewBox="0 0 30 30"><path d="M3 27 27 4" stroke="#5c2d99"/></svg></i>
      </div>
      <div class="hs ch"><svg width="9" height="9"><use href="#left"/></svg><u></u><svg width="9" height="9"><use href="#right"/></svg></div>
      <div class="cab-name">Copper Straight-Through</div>
    </div>
    <div class="fold"><svg width="8" height="10" viewBox="0 0 8 10"><path d="M8 0v10L0 5z" fill="#666"/></svg></div>
  </div>
</section>

<section class="pdu">
  <header><span>PDU Information at Device: PC0</span><svg width="19" height="19" viewBox="0 0 19 19"><path d="M0 0h19v19H0z" fill="#c75050"/><path d="m7 7 5 5.500M12 7l-5 5.500" stroke="#fff" stroke-width="1.700"/></svg></header>
  <nav><span class="on">OSI Model</span><span class="n2">Inbound PDU Details</span><span class="n3">Outbound PDU Details</span><s></s></nav>
  <div class="p-info">At Device: PC0<br>Source: PC3<br>Destination: PC0</div>
  <div class="p-cols">
    <div class="p-col"><h4>In Layers</h4><div class="off">Layer7</div><div class="off">Layer6</div><div class="off">Layer5</div><div class="off">Layer4</div><div class="l3">Layer 3: IP Header Src. IP: 192.168.0.4,<br>Dest. IP: 192.168.0.1 ICMP Message Type:<br>8</div><div class="l2">Layer 2: Ethernet II Header<br>0090.0C34.70C5 &gt;&gt; 0060.2FCE.9676</div><div class="l1">Layer 1: Port FastEthernet0</div></div>
    <svg width="29" height="174" viewBox="0 0 29 174"><path d="M10.500 89v33l8-16z" fill="#fff" stroke="#ccc"/></svg>
    <div class="p-col"><h4>Out Layers</h4><div class="off">Layer7</div><div class="off">Layer6</div><div class="off">Layer5</div><div class="off">Layer4</div><div class="l3">Layer 3: IP Header Src. IP: 192.168.0.1,<br>Dest. IP: 192.168.0.4 ICMP Message Type:<br>0</div><div class="l2">Layer 2: Ethernet II Header 0060.2FCE.<br>9676 &gt;&gt; 0090.0C34.70C5</div><div class="l1">Layer 1: Port(s): FastEthernet0</div></div>
  </div>
  <svg class="p-arrows" width="534" height="10" viewBox="0 0 534 10"><path d="M110 0h33v10h-33zM392 0h33v10h-33z" fill="#efefef"/><path d="m111 9.500 15.500-8 15.500 8zM393 1.500h31l-15.500 8z" fill="#fff" stroke="#ccc"/></svg>
  <p>1. FastEthernet0 receives the frame.</p>
  <footer><span class="btn ch-me">Challenge Me</span><span class="btn">&lt;&lt; Previous Layer</span><span class="btn">Next Layer &gt;&gt;</span></footer>
</section>

<footer class="taskbar">
  <div class="apps">
    <i class="start"><svg viewBox="0 0 24 24"><path d="m4 6 7-1v6.500H4zM12 4.800l8-1.200v7.900h-8zM4 12.500h7V19l-7-1zM12 12.500h8v8l-8-1.200z" fill="#fff"/></svg></i>
    <i class="run"><svg viewBox="0 0 24 24"><path d="M1 3h9l2 3h11v15H1z" fill="#ffd76e"/><path d="M1 3h9l1 3H1z" fill="#d69c00"/><path d="M5 22v-9h14v9h-4v-4H9v4z" fill="#3c9ae0"/></svg></i>
    <i><svg viewBox="0 0 24 24"><circle cx="12" cy="12" r="11.500" fill="#fbc116"/><path d="M12 12 2 6Q6 .5 12 .5 19 .5 22 7H12z" fill="#dc4436"/><path d="M2 6q-4 8 1 13 3 4 9 4.500L17 14l-5 3-5-3z" fill="#1ea362"/><circle cx="12" cy="12" r="5.500" fill="#fff"/><circle cx="12" cy="12" r="4.300" fill="#4688f1"/></svg></i>
    <i><svg viewBox="0 0 24 24"><circle cx="12" cy="12" r="11.500" fill="#30a3dc"/><path d="m4 12 14-6-2 12-5-3-2 3-1-5z" fill="#fff"/><path d="m9 13 7-6-6 7-1 4z" fill="#b8d5e7"/></svg></i>
    <i><svg viewBox="0 0 24 24"><use href="#viber"/></svg></i>
    <i><svg viewBox="0 0 24 24"><circle cx="12" cy="12" r="10" fill="#00aff0"/><circle cx="7" cy="7" r="6" fill="#00aff0"/><circle cx="17" cy="17" r="6" fill="#0091d5"/><path d="M16 8q-1-2-4-2-4 0-4 3t4 3 4 3q0 3-4 3-3 0-4-3" fill="none" stroke="#fff" stroke-width="2.500"/></svg></i>
    <i><svg viewBox="0 0 24 24"><path d="M0 0h24v24H0z" fill="#e8e8e0"/><path d="M1 0v24M5 0v24" stroke="#333" stroke-width="2" stroke-dasharray="2 2"/><path d="M7 0h17v24H7z" fill="#f28a17"/><path d="m7 0 6 1q2 12-4 22H7z" fill="#ffe114"/><path d="m8 2 4 8-4 12M16 1q-1 13-7 22" fill="none" stroke="#555" stroke-width="1.500"/><path d="M24 3q-7 6-9 20M24 11q-5 4-6 12" stroke="#ffd13a" fill="none"/></svg></i>
    <i><svg viewBox="0 0 24 24"><path d="M1 2h22v20H1z" fill="#050505" stroke="#aaa"/><path d="M1 2h22v3H1z" fill="#ccc"/><path d="M6 7H4v4h2M8 8v.5M8 10v.5M10 7l2 4M14 11h4" stroke="#ddd" fill="none"/></svg></i>
    <i><svg viewBox="0 0 24 24"><path d="m12 1 10 5v12l-10 6L2 18V6z" fill="#d7e2ec"/><path d="m12 2 8 4-8 4-8-4z" fill="#0f2a54"/><path d="m3.500 8 7 4v9l-7-4zM20.500 8l-7 4v9l7-4z" fill="#173d70"/></svg></i>
    <i><svg viewBox="0 0 24 24"><path d="M5 0q3 3 3 7h8q0-4 3-7 2 5 1 10 1 5-3 9l-3 5h-4l-3-5q-4-4-3-9-1-5 1-10z" fill="#fff"/><path d="m5 12 6 3v3q-5 0-6-6zM19 12l-6 3v3q5 0 6-6z" fill="#111"/></svg></i>
    <i class="run"><svg viewBox="0 0 24 24"><path d="M11 4q11-1 11 8 0 10-11 11Q1 22 1 14q1-8 10-10z" fill="#a9d4ef"/><circle cx="6" cy="13" r="2" fill="#e33"/><circle cx="8" cy="8" r="2" fill="#2a3"/><circle cx="14" cy="7" r="2" fill="#f6c20f"/><circle cx="7" cy="18" r="2" fill="#35d"/><path d="m20 3-6 20" stroke="#b36a28" stroke-width="3"/><path d="m17 0 6 1-2 6h-4z" fill="#dba979"/></svg></i>
    <i><svg viewBox="0 0 24 24"><path d="M1 1h22v22H1z" fill="#554b46" stroke="#aaa"/><path d="M1 1h22v4H1z" fill="#5d7f95"/><path d="M13 3h8" stroke="#e83" stroke-width="2" stroke-dasharray="2 1"/><path d="m4 9 6 4-6 4M12 18h8" stroke="#ddd" stroke-width="2" fill="none"/></svg></i>
    <i><svg viewBox="0 0 24 24"><path d="M3 0h18v24H3z" fill="#fff"/><path d="M5 2h14v4H5z" fill="#222"/><path d="M6 10h13M6 14h13M6 18h13" stroke="#222" stroke-width="2" stroke-dasharray="3 2"/></svg></i>
    <i class="run"><svg viewBox="0 0 24 24"><ellipse cx="12" cy="12" rx="8.500" ry="9.500" fill="none" stroke="#e3192b" stroke-width="4"/><path d="M14 2q9 2 9 10t-9 10q5-4 5-10T14 2z" fill="#ff4b52"/></svg></i>
    <i><svg viewBox="0 0 24 24"><path d="M5 3h19l-5 18H0z" fill="#3f77d8"/><path d="m7 6 6 6-9 6M12 18h6" fill="none" stroke="#fff" stroke-width="2"/></svg></i>
    <i><svg viewBox="0 0 24 24"><path d="M5 2h19l-4 14H1z" fill="#15acc8"/><path d="M1 16h19l-1 6H0z" fill="#b7c3c9"/><path d="m8 4 5 5-7 5M12 14h5" fill="none" stroke="#fff" stroke-width="2"/></svg></i>
    <i><svg viewBox="0 0 24 24"><path d="m17 0 7 3v18l-7 3z" fill="#22a2f2"/><path d="M17 0v7L4 18l-4-3zM0 9l4-3 13 11v7z" fill="#0b78bf"/></svg></i>
    <i class="run"><svg viewBox="0 0 24 24"><use href="#teams"/></svg></i>
    <i class="run prog"><svg viewBox="0 0 24 24"><path d="m17 4 4-4 4 5-4 4z" fill="#a51313" stroke="#d66"/><path d="M14 5q6 0 7 5L10 22q-5 3-8 0-4-4 0-8z" fill="#a20d0d" stroke="#c33" stroke-width=".6"/><path d="m10 8-4 7h4l-1 6 6-8h-4l1-5z" fill="#ffd21e"/></svg></i>
    <i class="run active"><svg viewBox="0 0 24 24"><use href="#tracericon"/></svg></i>
    <i class="run"><svg viewBox="0 0 24 24"><path d="M10 3h13v18H10z" fill="#fff"/><path d="M15 6h6M15 9h6M15 12h6M15 15h6M15 18h6" stroke="#2b579a"/><path d="m1 3 13-2v22L1 21z" fill="#2b5fb4"/><path d="m3 8 2 8 2.500-7L10 16l2-8" fill="none" stroke="#fff" stroke-width="1.600"/></svg></i>
  </div>
  <div class="tray">
    <svg width="12" height="7" viewBox="0 0 12 7"><path d="m.5 6.500 5.500-5.500 5.500 5.500" fill="none" stroke="#fff" stroke-width="1.300"/></svg>
    <svg width="16" height="16" viewBox="0 0 16 16"><rect width="16" height="16" rx="2" fill="#c4211a"/><path d="m4 4 4 4 5-1M8 8l-2 5M8 8l4 5" stroke="#ffd34d"/><circle cx="8" cy="8" r="3" fill="#ffd34d"/><circle cx="4" cy="4" r="2" fill="#ffe27b"/><circle cx="13" cy="6" r="2" fill="#ffc62d"/><circle cx="4" cy="13" r="2" fill="#ffd34d"/></svg>
    <svg width="12" height="14" viewBox="0 0 12 14"><path d="M0 0h12v14H0z" fill="#bbb"/><path d="M1 1h10v9H1z" fill="#333"/><path d="M0 11h12v3H0z" fill="#7ccdf8"/></svg>
    <svg width="16" height="16"><use href="#teams"/></svg>
    <svg width="16" height="16" viewBox="0 0 24 24"><use href="#viber"/><circle cx="18" cy="5" r="4.500" fill="#f01818"/></svg>
    <svg width="16" height="16" viewBox="0 0 16 16"><path d="M.5.5h15v15H.5z" fill="#111" stroke="#8aa"/><path d="M1 4.500h14M1 7.500h14M1 10.500h14M1 13.500h14" stroke="#176873"/></svg>
    <svg width="16" height="14" viewBox="0 0 16 14"><path d="M5 3.500h10.500v7H4M1 1.500h4v4H1zM3 6v6M9 11v2.500M5 13.500h8" fill="none" stroke="#fff"/></svg>
    <svg width="16" height="16" viewBox="0 0 16 16"><path d="M13 4Q9 1 6 4q-3 4 0 7 4 4 8-.5" fill="none" stroke="#d6402b" stroke-width="3.500"/><path d="m10 2-2 7" stroke="#2b83cf" stroke-width="2"/><path d="m6 8-6 4 4 4 5-4z" fill="#e9c492"/></svg>
    <svg width="17" height="14" viewBox="0 0 17 14"><path d="M1 5v4h2l4 4V1L3 5zM9 5q1.500 2 0 4M11.500 3q3 4 0 8" fill="none" stroke="#fff"/><path d="M14 1.500q4 5.500 0 11" fill="none" stroke="#777"/></svg>
    <span class="lang">ENG</span>
    <span class="when">19:56<br>7/23/2020</span>
    <span class="notif"><svg width="25" height="26" viewBox="0 0 25 26"><path d="M0 1h16v12h-6l-3 3-3-3H0z" fill="#fff"/><path d="M3 4.500h10M3 7.500h10M3 10.500h6" stroke="#222"/><circle cx="15.500" cy="16.500" r="7.500" fill="#333" stroke="#999"/></svg><b>9</b></span>
    <s></s>
  </div>
</footer>
</main>
</body>
</html>
```
FILE: styles.css
```css
* { box-sizing: border-box; }
body { margin: 0; width: 1920px; height: 1080px; overflow: hidden; font: 11px/14px "Liberation Sans", Arial, sans-serif; color: #000; white-space: nowrap; }
p, h4, figure { margin: 0; }
svg { display: block; flex: none; }
i, em { font-style: normal; }
s, u { text-decoration: none; }
.defs { position: absolute; width: 0; height: 0; }
.desktop { position: relative; width: 1920px; height: 1080px; overflow: hidden; background: linear-gradient(#55505c 0, #55505c 1px, #c9c6d6 2px, #d9d9e6 60px, #7fa0cc 75px, #84aee0 100px, #9fc0e6 108px, #3a4540 114px, #8fb4dd 150px, #27332b 175px, #46503f 260px, #1d241d 330px, #6b7280 350px, #4a5063 400px, #464d62 660px, #d6d3d3 674px, #3a4258 684px, #3b445b 800px, #8f8784 850px, #8d8a92 900px, #cfcac2 915px, #b58a2e 940px, #a9a59f 960px, #8c8a84 995px, #3d5a2a 1005px, #2e4720 1040px); }

/* ---- Word ---- */
.word { position: absolute; left: 0; top: 1px; width: 953px; height: 1039px; border-left: 1px solid #6d7f9e; border-bottom: 1px solid #7b7b7b; background: #e6e6e6; font: 11.5px/16px "Open Sans", "Noto Sans", sans-serif; }
.w-title { height: 32px; background: #2b579a; display: flex; align-items: center; color: #b3c3dd; }
.w-save { width: 15px; height: 15px; margin-left: 22px; }
.w-undo { width: 15px; height: 15px; margin-left: 14px; }
.w-caret { width: 6px; height: 4px; margin-left: 5px; }
.w-redo { width: 14px; height: 14px; margin-left: 8px; }
.w-more { width: 6px; height: 8px; margin-left: 19px; }
.w-name { width: 326px; margin-left: 256px; letter-spacing: -.06px; padding-top: 1px; }
.w-sign { width: 58px; height: 19px; line-height: 18px; background: #a6b8d6; color: #2b579a; text-align: center; letter-spacing: -.1px; }
.w-sys { width: 152px; height: 12px; margin-left: 26px; }
.w-tabs { height: 32px; background: #2b579a; color: #fff; display: grid; grid-template-columns: 53px 60px 56px 63px 63px 84px 72px 64px 52px 51px 22px 225px 19px 1fr; padding: 0 0 0 20px; align-items: center; letter-spacing: -.13px; }
.w-share, .w-person { color: #5c7bb3; }
.w-warn { height: 29px; background: #fcf5b5; border-bottom: 1px solid #d5cc72; display: flex; align-items: center; padding: 1px 0 0 11px; color: #3b3b3b; }
.w-warn b { width: 107px; margin-left: 11px; font-weight: 400; letter-spacing: .15px; color: #333; }
.w-careful { width: 617px; letter-spacing: -.11px; }
.w-enable { width: 109px; height: 22px; line-height: 19px; border: 1px solid #a5a5a5; background: #fdfdfd; text-align: center; letter-spacing: -.05px; }
.w-close { margin-left: 65px; }
.w-doc { height: 923px; padding-left: 62px; overflow: hidden; }
.sheet { width: 816px; background: #fff; border: 1px solid #c6c6c6; }
.sheet-one { height: 189px; border-top: 0; }
.sheet-two { height: 740px; margin-top: 14px; padding-top: 75px; font: 18.67px/22px "Liberation Serif", "Times New Roman", serif; }
.cap { width: 851px; text-align: center; }
.cap-two { margin-top: 42px; letter-spacing: .05px; }
.body { margin: 27px 0 0 111px; width: 629px; line-height: 22px; }
.body .just { text-align-last: justify; }
.body .first { margin-left: 72px; }
.body .ind { margin-left: 24px; letter-spacing: .03px; }
.body .nine, .body .hubs { margin-top: 2px; }

.xp { width: 474px; height: 382px; margin: 1px 0 0 194px; overflow: hidden; background: linear-gradient(#fcfcfe, #f3f3ee); font: 10.4px/13px "DejaVu Sans", Verdana, sans-serif; letter-spacing: .6px; }
.xp-title { height: 21px; background: linear-gradient(#0a5bd8, #0f6cf5 60%, #0547c0); color: #fff; font-weight: 700; font-size: 10.2px; display: flex; align-items: center; justify-content: space-between; padding: 0 1px 0 2px; letter-spacing: -.18px; }
.xp-tabs { height: 23px; display: flex; align-items: flex-end; border-bottom: 1px solid #919b9c; letter-spacing: .55px; }
.xp-tabs span { height: 20px; line-height: 17px; width: 139px; padding-left: 7px; border: 1px solid #919b9c; border-bottom: 0; border-radius: 3px 3px 0 0; background: #f7f7f4; }
.xp-tabs span.on { width: 82px; height: 23px; line-height: 18px; padding-left: 8px; margin-bottom: -1px; border-top: 2px solid #f0a030; background: #fcfcfe; }
.xp-tabs span:last-child { width: 147px; padding-left: 8px; }
.xp-info { margin: 12px 0 7px 16px; height: 39px; letter-spacing: .6px; }
.xp-cols { display: flex; padding-left: 12px; height: 206px; }
.xp-col { width: 213px; display: flex; flex-direction: column; }
.xp-col h4 { font: inherit; font-weight: 700; height: 16px; line-height: 16px; background: #e6e6e6; }
.xp-col div { border: 1px solid #000; background: #fff; padding: 3px 0 0 3px; overflow: hidden; flex: none; }
.xp-col .off { height: 19.500px; border-color: #c6c6c6; color: #c2c2c2; letter-spacing: .6px; }
.xp-col .l3 { height: 46px; }
.xp-col .hot { background: #ffffc4; }
.xp-col .l2 { height: 46px; }
.xp-col .l1 { height: 19px; padding-top: 2px; }
.xp-arrows { margin-top: -1px; }
.xp-note { margin: 0 0 0 12px; width: 454px; padding: 3px 0 0 5px; background: #fff; height: 72px; }

.w-status { height: 21px; background: #f3f3f3; border-top: 1px solid #c6c6c6; display: flex; align-items: center; color: #444; padding-left: 8px; font-size: 11.300px; }
.w-status > span { margin-top: -2px; }
.w-page { width: 76px; letter-spacing: -.1px; }
.w-words { width: 575px; letter-spacing: -.15px; }
.w-view { width: 39px; height: 20px; display: flex; align-items: center; justify-content: center; }
.w-view.on { background: #c6c6c6; }
.w-zoom { margin-left: 4px; margin-top: -1px; }
.w-pct { margin-left: 12px; letter-spacing: -.3px; }

/* ---- Packet Tracer ---- */
.tracer { position: absolute; left: 953px; top: 1px; width: 958px; height: 1039px; background: #fff; border-left: 1px solid #7a7a7a; box-shadow: -3px 0 8px rgba(0,0,0,.18); fill: #333; }
.t-title { height: 30px; display: flex; align-items: center; padding-left: 7px; font: 12px/16px "Open Sans", "Noto Sans", sans-serif; color: #8c8c8c; }
.t-title span { width: 806px; margin-left: 5px; letter-spacing: -.15px; }
.t-sys { margin-left: 4px; }
.t-menu { height: 20px; border-bottom: 1px solid #ececec; display: grid; grid-template-columns: 32px 33px 53px 42px 41px 69px 1fr; padding: 3px 0 0 7px; color: #999; letter-spacing: -.1px; }
.t-bar { height: 35px; border-bottom: 1px solid #bdbdbd; display: flex; align-items: center; }
.t-bar i { width: 31px; height: 25px; display: flex; align-items: center; justify-content: center; flex: none; }
.t-bar i svg { width: 20px; height: 20px; }
.t-bar b { width: 1px; height: 25px; margin: 0 2px 0 3px; background: #c8c8c8; flex: none; }
.t-bar .sel { width: 25px; margin-left: 4px; background: #cce8ff; border: 1px solid #99d1ff; }
.t-help { margin-left: 326px; }
.t-blue { height: 29px; background: #049fd9; color: #fff; display: flex; align-items: center; }
.pill { height: 24px; border: 1px solid #d4effa; border-radius: 12px; display: flex; align-items: center; justify-content: center; flex: none; padding-bottom: 1px; }
.p44 { width: 44px; margin-right: 3px; }
.logical { width: 83px; height: 29px; margin-left: -1px; border: 1px solid #000; border-radius: 14px; background: #fff; color: #000; font-weight: 700; font-size: 14.300px; gap: 4px; padding-bottom: 2px; }
.physical { width: 87px; height: 28px; margin: 0 3px 0 2px; border-radius: 14px; font-size: 15px; gap: 7px; padding-bottom: 1px; }
.t-xy { width: 493px; font-size: 10px; letter-spacing: -.1px; padding-bottom: 1px; }
.t-root { width: 30px; padding-bottom: 1px; letter-spacing: -.1px; }
.clock { width: 71px; gap: 4px; padding-left: 2px; letter-spacing: -.35px; }
.t-mid { height: 770px; display: flex; background: #f0f0f0; }
.canvas { width: 553px; display: grid; grid-template: 752px 16px / 536px 16px; border-right: 1px solid #828790; border-bottom: 1px solid #828790; border-top: 1px solid #999; background: #f0f0f0; }
.c-area { background: #fff; }
.vs { width: 15px; background: #f0f0f0; display: flex; flex-direction: column; align-items: center; padding: 4px 0; }
.vs u { width: 15px; height: 134px; margin: 4px 0 auto; background: #cdcdcd; }
.hs { height: 15px; width: 536px; background: #f0f0f0; display: flex; align-items: center; padding: 0 5px 0 4px; }
.hs u { height: 15px; width: 67px; margin: 0 auto 0 21px; background: #cdcdcd; }
.sim { width: 400px; margin-left: 4px; }
.s-head { height: 20px; background: #dadada; border: 1px solid #b4b4b4; display: flex; align-items: center; justify-content: space-between; padding: 0 4px; }
.s-group { border: 1px solid #a0a0a0; box-shadow: inset 1px 1px #fff; padding: 0 3px; }
.s-label { height: 19px; line-height: 21px; }
.s-events { height: 553px; margin-top: 1px; }
.s-table { width: 392px; height: 503px; border: 1px solid #828790; background: #fff; display: flex; }
.rows { width: 374px; }
.th, .tr { display: grid; grid-template-columns: 47px 64px 90px 80px 1fr; }
.th { height: 22px; line-height: 23px; }
.th span { padding-left: 4px; border-right: 1px solid #e5e5e5; }
.tr { height: 18px; line-height: 18px; }
.tr:nth-child(odd) { background: #f5f5f5; }
.tr span { padding: 0 3px 0 4px; justify-self: start; letter-spacing: -.05px; }
.tr i { padding: 3px 0 0 23px; color: #333; }
.tr span:last-child { border-left: 16px solid; padding-left: 6px; margin-left: 4px; height: 16px; margin-top: 1px; line-height: 16px; letter-spacing: -.4px; }
.lime span:last-child { border-image: linear-gradient(#d5fb1c, #d5fb1c) 1; }
.mauve span:last-child { border-image: linear-gradient(#bda7bb, #bda7bb) 1; }
.red span:last-child { border-image: linear-gradient(#b80d18, #b80d18) 1; }
.blue span:last-child { border-image: linear-gradient(#0a6abc, #0a6abc) 1; }
.cur span { background: #cdcdcd; }
.tr.cur i { width: 26px; height: 18px; margin-left: 21px; padding-left: 2px; background: #cdcdcd; color: #1a5c8e; }
.tv { margin-left: auto; width: 16px; }
.tv u { height: 210px; margin: auto 0 4px; }
.s-reset { display: flex; align-items: center; height: 29px; padding-left: 1px; }
.btn { border: 1px solid #adadad; background: #e1e1e1; display: flex; align-items: center; justify-content: center; flex: none; letter-spacing: -.15px; }
.s-reset .btn { width: 85px; height: 23px; margin-right: 6px; padding-bottom: 0; }
.s-reset svg { margin-right: 5px; }
.cap-state { margin-left: auto; letter-spacing: -.1px; }
.s-reset em { color: #2fe04a; font-size: 10px; width: 4px; margin: -2px 0 0 2px; }
.s-play { height: 75px; margin-top: 1px; }
.s-play .s-label { height: 20px; }
.s-btns { display: flex; gap: 4px; justify-content: center; height: 26px; }
.s-btns .btn { width: 30px; padding: 0; }
.s-btns .on { background: #cce4f7; border-color: #005499; }
.slider { display: flex; align-items: center; height: 21px; margin-top: 3px; }
.slider div { height: 4px; width: 381px; border: 1px solid #d3d3d3; background: #e7eaea; }
.slider u { width: 10px; height: 21px; background: #0078d7; }
.s-filter { height: 119px; margin-top: 1px; }
.s-filter p { height: 73px; letter-spacing: -.42px; }
.s-filter .tight { letter-spacing: -.64px; }
.s-two { display: flex; gap: 4px; padding-left: 1px; height: 21px; }
.s-two .btn { width: 193px; }
.time { width: 92px; margin-left: 16px; letter-spacing: -.2px; padding-bottom: 1px; }
.t-time .p44 { margin-right: 2px; }
.t-time .pc { width: 89px; letter-spacing: -.4px; padding-bottom: 1px; }
.evbtn { width: 71px; height: 21px; border: 1px solid #fff; margin: 0 4px 0 303px; display: flex; align-items: center; gap: 4px; padding: 0 0 1px 2px; letter-spacing: -.2px; }
.realtime { width: 90px; height: 28px; border-radius: 14px; font-size: 15px; gap: 4px; }
.simulation { width: 105px; height: 28px; margin-left: 2px; border: 1px solid #000; border-radius: 14px; background: #fff; color: #000; font-weight: 700; font-size: 13.800px; gap: 5px; }
.t-foot { height: 91px; display: flex; background: #f0f0f0; border-bottom: 1px solid #777; }
.dev { width: 186px; margin: 3px 0 4px; padding: 0 2px; background: #fff; }
.dev-row { display: flex; height: 31px; align-items: center; }
.dev-row i { width: 30.300px; height: 30px; padding: 1px; }
.dev-row i svg { width: 100%; height: 100%; }
.dev-row .sel { background: #9ff; border: 1px solid #1b3c4c; padding: 0; }
.dev-row .gridicon { width: 16px; height: 20px; margin-left: 8px; padding: 0; }
.dev-input { height: 21px; border: 1px solid #777; }
.cables { width: 752px; background: #fff; border: 1px solid #828790; border-width: 1px 1px 0; }
.cab-row { height: 53px; display: flex; gap: 6px; padding: 1px 0 0 3px; }
.cab-row i { width: 34px; height: 34px; border: 1px solid #bdbdbd; border-radius: 4px; background: #e4e4e4; padding: 1px; }
.cab-row svg { width: 30px; height: 30px; fill: none; stroke-width: 2; }
.ch { width: 750px; height: 16px; padding-right: 4px; }
.ch u { width: 214px; height: 16px; margin-left: 4px; }
.cab-name { height: 20px; margin: 0 -1px; border: 1px solid #000; text-align: center; line-height: 18px; letter-spacing: -.1px; }
.fold { padding: 40px 0 0 7px; }

/* ---- PDU dialog ---- */
.pdu { position: absolute; left: 935px; top: 197px; width: 556px; height: 565px; background: #fff; border-top: 1px solid #555; box-shadow: 0 4px 16px rgba(0,0,0,.38); }
.pdu header { height: 30px; display: flex; justify-content: space-between; padding: 7px 1px 0 8px; font: 11.5px/16px "Open Sans", "Noto Sans", sans-serif; letter-spacing: -.05px; }
.pdu nav { height: 23px; display: flex; font: 11.2px/25px "DejaVu Sans", Verdana, sans-serif; letter-spacing: .13px; }
.pdu nav .on { width: 83px; padding-left: 12px; color: #049fd9; border-bottom: 5px solid #049fd9; }
.pdu nav .n2 { width: 142px; padding-left: 12px; }
.pdu nav .n3 { width: 150px; padding-left: 12px; }
.pdu nav s { flex: 1; background: #f0f0f0; }
.p-info { margin: 11px 11px 0; height: 46px; border: 1px solid #777; padding: 1px 0 0 3px; letter-spacing: -.15px; }
.p-cols { display: flex; padding: 5px 0 0 11px; }
.p-col { width: 253px; font: 11px/13px "DejaVu Sans", Verdana, sans-serif; letter-spacing: .34px; }
.p-col:last-child { width: 252px; }
.p-col h4 { font: 700 11px/16px "Liberation Sans", Arial, sans-serif; height: 15px; letter-spacing: 0; }
.p-col div { border: 1px solid #000; background: #efefef; padding: 2px 0 0 3px; }
.p-col .off { height: 17px; border-color: #777; color: #808080; }
.p-col .l3 { height: 43px; }
.p-col .l2 { height: 30px; }
.p-col .l1 { height: 17px; }
.p-arrows { margin: 1px 0 0 11px; }
.pdu p { margin: 8px 0 0 16px; letter-spacing: -.08px; }
.pdu footer { display: flex; gap: 6px; margin: 192px 13px 0; height: 21px; }
.pdu footer .btn { width: 118px; }
.pdu footer .ch-me { width: 73px; margin-right: auto; letter-spacing: -.3px; }

/* ---- Taskbar ---- */
.taskbar { position: absolute; left: 0; top: 1040px; width: 1920px; height: 40px; display: flex; justify-content: space-between; background: linear-gradient(90deg, #303030, #2c2c2b 60%, #1f231c); color: #fff; }
.apps { display: flex; }
.apps i { width: 40.500px; margin-right: 8.500px; height: 40px; display: flex; align-items: center; justify-content: center; }
.apps .start { width: 48px; margin-right: 7px; }
.apps svg { width: 24px; height: 24px; }
.apps .run { border-bottom: 2px solid #a6cdf5; padding-top: 2px; }
.apps .prog { background: linear-gradient(90deg, #3f7a3d 65%, #4c4c4c 65%); border-color: #45e33a; margin-right: 4px; }
.apps .active { width: 48px; margin-right: 5px; background: #555; }
.tray { display: flex; align-items: center; gap: 8.500px; font: 12px/18px "Open Sans", "Noto Sans", sans-serif; }
.tray svg:first-child { margin-right: 2px; }
.lang { margin-left: .5px; width: 26px; letter-spacing: -.2px; font-size: 11.500px; }
.when { width: 76px; text-align: center; font-size: 11.300px; letter-spacing: -.2px; margin-left: -10px; }
.notif { position: relative; width: 25px; margin-left: -2.500px; }
.notif b { position: absolute; left: 12px; top: 8px; font-size: 11px; font-weight: 600; }
.tray s { width: 5px; height: 40px; margin-left: 2.500px; border-left: 1px solid #777; }
```
